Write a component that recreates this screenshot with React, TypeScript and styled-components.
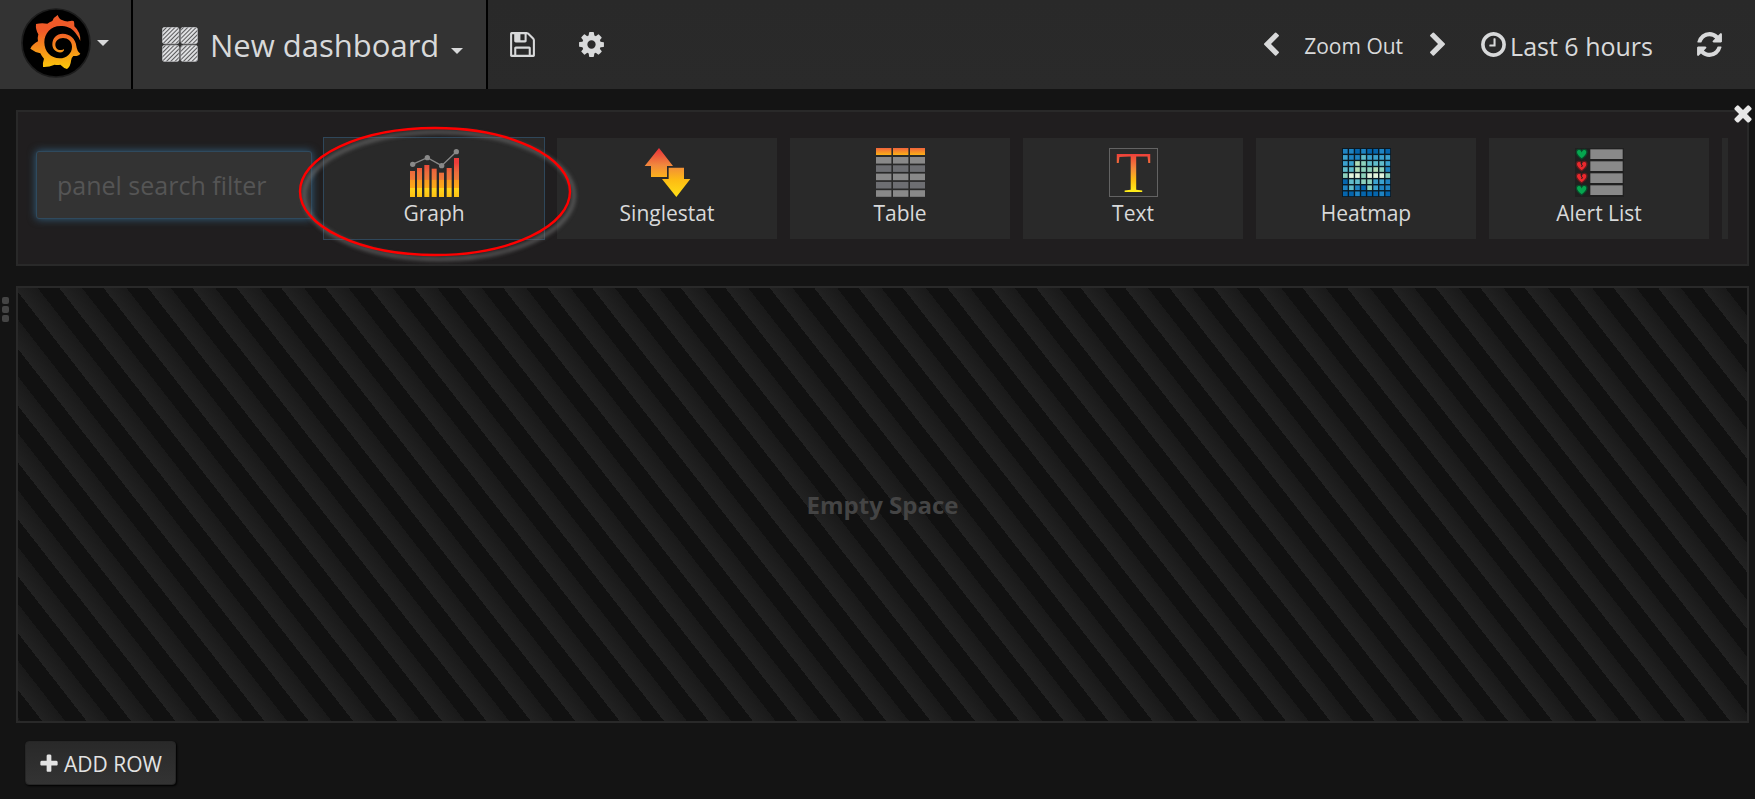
import React, { ReactNode } from "react";
import styled, { createGlobalStyle } from "styled-components";

const GlobalStyle = createGlobalStyle`
  *, *::before, *::after { box-sizing: border-box; }
  body {
    margin: 0;
    background: #141414;
    color: #d8d9da;
    font-family: "Open Sans", "Liberation Sans", sans-serif;
    font-size: 25px;
  }
  button, input { font: inherit; color: inherit; }
  svg { display: block; flex: none; }
`;

const Navbar = styled.header`
  display: flex;
  align-items: stretch;
  height: 89px;
  background: linear-gradient(180deg, #292929, #2a2a2a);
`;

const NavSection = styled.button<{ $pad: string; $gap: number }>`
  display: flex;
  align-items: center;
  gap: ${(p) => p.$gap}px;
  padding: ${(p) => p.$pad};
  border: 0;
  border-right: 2px solid #000;
  background: #333;
  font-size: 31px;
  line-height: 40px;
  white-space: nowrap;
`;

const Caret = styled.span<{ $low?: boolean }>`
  border: 6px solid transparent;
  border-top-color: #d8d9da;
  border-bottom: 0;
  margin-top: ${(p) => (p.$low ? 12 : 0)}px;
`;

const NavActions = styled.nav`
  display: flex;
  align-items: center;
  gap: 40px;
  padding: 0 20px;
`;

const TimeControls = styled.div`
  display: flex;
  align-items: center;
  gap: 20px;
  margin-left: auto;
  padding-right: 31px;
`;

const NavButton = styled.button<{ $size?: number; $after?: number }>`
  display: flex;
  align-items: center;
  gap: 2px;
  padding: 0;
  border: 0;
  background: none;
  font-size: ${(p) => p.$size ?? 25}px;
  line-height: 32px;
  margin-right: ${(p) => p.$after ?? 0}px;
  white-space: nowrap;
`;

const NavLabel = styled.span`
  padding-top: 2px;
`;

const Main = styled.main`
  display: flex;
  flex-direction: column;
  padding: 21px 6px 14px 16px;
`;

const Picker = styled.section`
  position: relative;
  display: flex;
  align-items: center;
  height: 156px;
  padding: 0 19px 0 18px;
  border: 2px solid #292929;
  background: #201e1f;
`;

const SearchInput = styled.input`
  flex: none;
  width: 276px;
  height: 68px;
  margin-bottom: 6px;
  padding: 0 20px;
  border: 1px solid #2f4a5e;
  border-radius: 3px;
  background: #333;
  outline: none;
  box-shadow: 0 0 9px #33607f;
  &::placeholder { color: #555; opacity: 1; }
`;

const TileList = styled.div`
  display: flex;
  flex: 1;
  gap: 13px;
  min-width: 0;
  padding: 1px 0 1px 12px;
  overflow: hidden;
`;

const Tile = styled.button<{ $active?: boolean }>`
  display: flex;
  flex: none;
  flex-direction: column;
  align-items: center;
  width: 220px;
  height: 101px;
  padding: 10px 0 0;
  border: 0;
  background: #292929;
  font-size: 21px;
  line-height: 32px;
  box-shadow: ${(p) => (p.$active ? "0 0 0 1px #2f475a" : "none")};
`;

const CloseButton = styled.button`
  position: absolute;
  top: -12px;
  right: -9px;
  padding: 0;
  border: 0;
  background: none;
  color: #e8e8e8;
`;

const Highlight = styled.svg`
  position: absolute;
  top: 10px;
  left: 276px;
  pointer-events: none;
  filter: drop-shadow(4px 4px 2px #777);
`;

const Row = styled.section`
  position: relative;
  margin-top: 20px;
`;

const RowHandle = styled.button`
  position: absolute;
  top: 11px;
  left: -14px;
  display: flex;
  flex-direction: column;
  gap: 2px;
  padding: 0;
  border: 0;
  background: none;
`;

const Dot = styled.span`
  width: 7px;
  height: 7px;
  border-radius: 2px;
  background: #444;
`;

const EmptyPanel = styled.div`
  display: flex;
  align-items: center;
  justify-content: center;
  height: 437px;
  border: 2px solid #292929;
  background: repeating-linear-gradient(-128deg, #111, #111 17px, #191919 17px, #222 35px);
  color: #444;
  font-size: 24px;
  font-weight: 700;
`;

const AddRowButton = styled.button`
  display: flex;
  align-items: center;
  align-self: flex-start;
  gap: 4px;
  height: 44px;
  margin: 18px 0 0 9px;
  padding: 2px 13px 0 12px;
  border: 1px solid #262626;
  border-radius: 4px;
  background: linear-gradient(180deg, #292929, #333);
  box-shadow: 1px 1px 2px #000;
  color: #e3e3e3;
  font-size: 21px;
`;

const glyphs = {
  save: "M512 1536h768v-384h-768v384zm896 0h128v-896q0-14-10-38.5t-20-34.5l-281-281q-10-10-34-20t-39-10v416q0 40-28 68t-68 28h-576q-40 0-68-28t-28-68v-416h-128v1280h128v-416q0-40 28-68t68-28h832q40 0 68 28t28 68v416zm-384-928v-320q0-13-9.5-22.5t-22.5-9.5h-192q-13 0-22.5 9.5t-9.5 22.5v320q0 13 9.5 22.5t22.5 9.5h192q13 0 22.5-9.5t9.5-22.5zm640 32v928q0 40-28 68t-68 28h-1344q-40 0-68-28t-28-68v-1344q0-40 28-68t68-28h928q40 0 88 20t76 48l280 280q28 28 48 76t20 88z",
  cog: "M1152 896q0-106-75-181t-181-75-181 75-75 181 75 181 181 75 181-75 75-181zm512-109v222q0 12-8 23t-20 13l-185 28q-19 54-39 91 35 50 107 138 10 12 10 25t-9 23q-27 37-99 108t-94 71q-12 0-26-9l-138-108q-44 23-91 38-16 136-29 186-7 28-36 28h-222q-14 0-24.5-8.5t-11.5-21.5l-28-184q-49-16-90-37l-141 107q-10 9-25 9-14 0-25-11-126-114-165-168-7-10-7-23 0-12 8-23 15-21 51-66.5t54-70.5q-27-50-41-99l-183-27q-13-2-21-12.5t-8-23.5v-222q0-12 8-23t19-13l186-28q14-46 39-92-40-57-107-138-10-12-10-24 0-10 9-23 26-36 98.5-107.5t94.5-71.5q13 0 26 10l138 107q44-23 91-38 16-136 29-186 7-28 36-28h222q14 0 24.5 8.5t11.5 21.5l28 184q49 16 90 37l142-107q9-9 24-9 13 0 25 10 129 119 165 170 7 8 7 22 0 12-8 23-15 21-51 66.5t-54 70.5q26 50 41 98l183 28q13 2 21 12.5t8 23.5z",
  clock: "M1024 544v448q0 14-9 23t-23 9h-320q-14 0-23-9t-9-23v-64q0-14 9-23t23-9h224v-352q0-14 9-23t23-9h64q14 0 23 9t9 23zm416 352q0-148-73-273t-198-198-273-73-273 73-198 198-73 273 73 273 198 198 273 73 273-73 198-198 73-273zm224 0q0 209-103 385.5t-279.5 279.5-385.5 103-385.5-103-279.5-279.5-103-385.5 103-385.5 279.5-279.5 385.5-103 385.5 103 279.5 279.5 103 385.5z",
  refresh: "M1639 1056q0 5-1 7-64 268-268 434.5t-478 166.5q-146 0-282.5-55t-243.5-157l-129 129q-19 19-45 19t-45-19-19-45v-448q0-26 19-45t45-19h448q26 0 45 19t19 45-19 45l-137 137q71 66 161 102t187 36q134 0 250-65t186-179q11-17 53-117 8-23 30-23h192q13 0 22.5 9.5t9.5 22.5zm25-800v448q0 26-19 45t-45 19h-448q-26 0-45-19t-19-45 19-45l138-138q-148-137-349-137-134 0-250 65t-186 179q-11 17-53 117-8 23-30 23h-199q-13 0-22.5-9.5t-9.5-22.5v-7q65-268 270-434.5t480-166.5q146 0 284 55.5t245 156.5l130-129q19-19 45-19t45 19 19 45z",
  left: "M1427 301l-531 531 531 531q19 19 19 45t-19 45l-166 166q-19 19-45 19t-45-19l-742-742q-19-19-19-45t19-45l742-742q19-19 45-19t45 19l166 166q19 19 19 45t-19 45z",
  right: "M1363 877l-742 742q-19 19-45 19t-45-19l-166-166q-19-19-19-45t19-45l531-531-531-531q-19-19-19-45t19-45l166-166q19-19 45-19t45 19l742 742q19 19 19 45t-19 45z",
  times: "M1490 1322q0 40-28 68l-136 136q-28 28-68 28t-68-28l-294-294-294 294q-28 28-68 28t-68-28l-136-136q-28-28-28-68t28-68l294-294-294-294q-28-28-28-68t28-68l136-136q28-28 68-28t68 28l294 294 294-294q28-28 68-28t68 28l136 136q28 28 28 68t-28 68l-294 294 294 294q28 28 28 68z",
  plus: "M1600 736v192q0 40-28 68t-68 28h-416v416q0 40-28 68t-68 28h-192q-40 0-68-28t-28-68v-416h-416q-40 0-68-28t-28-68v-192q0-40 28-68t68-28h416v-416q0-40 28-68t68-28h192q40 0 68 28t28 68v416h416q40 0 68 28t28 68z",
};

function Glyph({ name, size }: { name: keyof typeof glyphs; size: number }) {
  return (
    <svg width={size} height={size} viewBox="0 0 1792 1792" fill="currentColor" aria-hidden="true">
      <path d={glyphs[name]} />
    </svg>
  );
}

function Logo() {
  return (
    <svg width="70" height="70" viewBox="9 12 210 210" aria-hidden="true">
      <defs>
        <linearGradient id="logo" x1="0" y1="33" x2="0" y2="195" gradientUnits="userSpaceOnUse">
          <stop offset="0.3" stopColor="#f05a28" />
          <stop offset="1" stopColor="#fbca0a" />
        </linearGradient>
      </defs>
      <circle cx="114" cy="117" r="102" fill="#000" stroke="#1c1c1c" strokeWidth="5" />
      <path
        fill="url(#logo)"
        d="M119 33Q124 46 132 48Q141 53 152 52Q161 49 167 51Q170 57 169 67Q188 84 187 111Q182 98 172 86C160 71 145 66 127 66C99 66 79 88 79 115C79 143 99 163 125 163C146 163 162 148 162 128C162 112 149 102 135 102C121 102 112 111 112 122C112 131 118 138 127 138Q134 139 138 135Q140 141 132 145C116 148 103 137 103 121C103 102 116 89 134 89C156 89 173 105 175 126Q177 142 187 149Q182 157 166 156Q160 160 159 171Q158 186 147 195Q137 192 127 182Q118 184 110 182Q92 190 75 189Q73 178 78 164Q70 155 67 148Q50 144 37 134Q44 120 60 112Q58 101 61 91Q52 76 54 60Q70 56 88 59Q94 54 103 51Q108 39 119 33Z"
      />
    </svg>
  );
}

function DashboardIcon() {
  return (
    <svg width="36" height="35" viewBox="0 0 36 35" aria-hidden="true">
      <defs>
        <pattern id="hatch" width="3" height="3" patternUnits="userSpaceOnUse" patternTransform="rotate(45)">
          <rect width="3" height="3" fill="#dfe0e2" />
          <rect width="1" height="3" fill="#58585a" />
        </pattern>
      </defs>
      <g fill="url(#hatch)" stroke="#c4c6ca" strokeWidth="0.6">
        <rect x="0.3" y="0.3" width="16.8" height="16.4" rx="2.5" />
        <rect x="18.8" y="0.3" width="16.8" height="16.4" rx="2.5" />
        <rect x="0.3" y="18.2" width="16.8" height="16.4" rx="2.5" />
        <rect x="18.8" y="18.2" width="16.8" height="16.4" rx="2.5" />
      </g>
    </svg>
  );
}

const bars = [
  [360, 183],
  [381, 174],
  [403, 165],
  [425, 176],
  [447, 188],
  [470, 174],
  [492, 144],
];

function GraphIcon() {
  return (
    <svg width="49" height="49" viewBox="360 114 147 147" aria-hidden="true">
      <defs>
        <linearGradient id="bars" x1="0" y1="144" x2="0" y2="261" gradientUnits="userSpaceOnUse">
          <stop offset="0.12" stopColor="#ee3b3a" />
          <stop offset="0.36" stopColor="#ec6b3c" />
          <stop offset="0.55" stopColor="#ee7a38" />
          <stop offset="0.56" stopColor="#f79a1e" />
          <stop offset="0.76" stopColor="#fba919" />
          <stop offset="0.78" stopColor="#ffd51c" />
          <stop offset="1" stopColor="#fdc013" />
        </linearGradient>
      </defs>
      {bars.map(([x, y]) => (
        <rect key={x} x={x} y={y} width="15" height={261 - y} fill="url(#bars)" />
      ))}
      <path d="M367 163L412 143L455 167L499 125" fill="none" stroke="#898989" strokeWidth="4" />
      <g fill="#898989">
        <circle cx="368" cy="163" r="8" />
        <circle cx="412" cy="143" r="8" />
        <circle cx="455" cy="167" r="8" />
        <circle cx="499" cy="125" r="8" />
      </g>
    </svg>
  );
}

function SinglestatIcon() {
  return (
    <svg width="49" height="49" viewBox="279 84 147 147" aria-hidden="true">
      <defs>
        <linearGradient id="arrows" x1="0" y1="84" x2="0" y2="231" gradientUnits="userSpaceOnUse">
          <stop offset="0" stopColor="#e9303a" />
          <stop offset="0.35" stopColor="#f1883d" />
          <stop offset="0.65" stopColor="#fdbb14" />
          <stop offset="1" stopColor="#ffe015" />
        </linearGradient>
      </defs>
      <g fill="url(#arrows)">
        <path d="M327 84L369 138H351V171H303V138H284Z" />
        <path d="M356 143H402V177H421L379 231L336 177H356Z" />
      </g>
    </svg>
  );
}

function TableIcon() {
  const columns = [0, 17, 34];
  return (
    <svg width="49" height="49" viewBox="0 0 49 49" aria-hidden="true">
      <defs>
        <linearGradient id="thead" x1="0" y1="0" x2="0" y2="1">
          <stop offset="0" stopColor="#f1643c" />
          <stop offset="1" stopColor="#fbb116" />
        </linearGradient>
      </defs>
      {columns.map((x) => (
        <g key={x}>
          <rect x={x} width="15.4" height="7" fill="url(#thead)" />
          {[0, 1, 2, 3, 4].map((r) => (
            <rect key={r} x={x} y={9 + r * 8.3} width="15.4" height="6.6" fill={r % 2 ? "#6d6e72" : "#898989"} />
          ))}
        </g>
      ))}
    </svg>
  );
}

function TextIcon() {
  return (
    <svg width="49" height="49" viewBox="0 0 49 49" aria-hidden="true">
      <defs>
        <linearGradient id="letter" x1="0" y1="5" x2="0" y2="44" gradientUnits="userSpaceOnUse">
          <stop offset="0" stopColor="#ee3a3a" />
          <stop offset="0.4" stopColor="#f3893a" />
          <stop offset="0.7" stopColor="#fcc011" />
          <stop offset="1" stopColor="#fff01a" />
        </linearGradient>
      </defs>
      <rect x="0.5" y="0.5" width="48" height="48" fill="#2b2b2b" stroke="#636363" />
      <text x="24.5" y="43.5" textAnchor="middle" fontFamily="Liberation Serif, serif" fontSize="58" fill="url(#letter)">
        T
      </text>
    </svg>
  );
}

const heatColors = ["#0566ae", "#1f84c3", "#3ba2cf", "#60bccb", "#8bd0bb", "#b0dcb6", "#e2f3dc"];
const heatRows = ["11010010", "21132222", "22543332", "33544541", "46646664", "03344221", "13104211", "00100010"];

function HeatmapIcon() {
  return (
    <svg width="49" height="49" viewBox="0 0 147 147" aria-hidden="true">
      <rect width="147" height="147" fill="#0b1a24" />
      {heatRows.map((row, r) =>
        row.split("").map((level, c) => (
          <rect key={`${r}-${c}`} x={3 + c * 18.2} y={3 + r * 18.2} width="14" height="14" fill={heatColors[Number(level)]} />
        ))
      )}
    </svg>
  );
}

function AlertListIcon() {
  const states = [true, false, false, true];
  return (
    <svg width="49" height="49" viewBox="0 0 147 147" aria-hidden="true">
      <rect width="147" height="147" fill="#202020" />
      {states.map((ok, i) => (
        <g key={i} transform={`translate(0 ${i * 36})`}>
          <path
            d="M20 33C10 26 4 19 4 12C4 3 16 1 20 9C24 1 36 3 36 12C36 19 30 26 20 33Z"
            fill={ok ? "#06a64f" : "#e9282d"}
            stroke={ok ? "#0b4a2b" : "#5f1c1e"}
            strokeWidth="4"
          />
          {!ok && <path d="M20 6L18 12L22 15L20 21" fill="none" stroke="#202020" strokeWidth="3" />}
          <rect x="46" y="4" width="97" height="29" fill="#898989" />
        </g>
      ))}
    </svg>
  );
}

const panels: { label: string; icon: ReactNode }[] = [
  { label: "Graph", icon: <GraphIcon /> },
  { label: "Singlestat", icon: <SinglestatIcon /> },
  { label: "Table", icon: <TableIcon /> },
  { label: "Text", icon: <TextIcon /> },
  { label: "Heatmap", icon: <HeatmapIcon /> },
  { label: "Alert List", icon: <AlertListIcon /> },
];

export default function App() {
  return (
    <>
      <GlobalStyle />
      <Navbar>
        <NavSection $pad="0 22px 3px 21px" $gap={6} aria-label="Main menu">
          <Logo />
          <Caret />
        </NavSection>
        <NavSection $pad="0 23px 0 29px" $gap={12}>
          <DashboardIcon />
          New dashboard
          <Caret $low />
        </NavSection>
        <NavActions>
          <NavButton aria-label="Save dashboard">
            <Glyph name="save" size={29} />
          </NavButton>
          <NavButton aria-label="Settings">
            <Glyph name="cog" size={29} />
          </NavButton>
        </NavActions>
        <TimeControls>
          <NavButton aria-label="Back">
            <Glyph name="left" size={26} />
          </NavButton>
          <NavButton $size={21} $after={2}>
            <NavLabel>Zoom Out</NavLabel>
          </NavButton>
          <NavButton aria-label="Forward" $after={8}>
            <Glyph name="right" size={26} />
          </NavButton>
          <NavButton $after={22}>
            <Glyph name="clock" size={29} />
            <NavLabel>Last 6 hours</NavLabel>
          </NavButton>
          <NavButton aria-label="Refresh">
            <Glyph name="refresh" size={29} />
          </NavButton>
        </TimeControls>
      </Navbar>
      <Main>
        <Picker>
          <SearchInput type="text" placeholder="panel search filter" aria-label="Panel search filter" />
          <TileList>
            {panels.map((panel, i) => (
              <Tile key={panel.label} $active={i === 0}>
                {panel.icon}
                {panel.label}
              </Tile>
            ))}
            <Tile aria-label="More panels" />
          </TileList>
          <CloseButton aria-label="Close">
            <Glyph name="times" size={26} />
          </CloseButton>
          <Highlight width="290" height="146" viewBox="0 0 290 146" aria-hidden="true">
            <ellipse cx="141" cy="69.5" rx="135" ry="63.5" fill="none" stroke="#f00" strokeWidth="2.4" />
          </Highlight>
        </Picker>
        <Row>
          <RowHandle aria-label="Row menu">
            <Dot />
            <Dot />
            <Dot />
          </RowHandle>
          <EmptyPanel>Empty Space</EmptyPanel>
        </Row>
        <AddRowButton>
          <Glyph name="plus" size={22} />
          ADD ROW
        </AddRowButton>
      </Main>
    </>
  );
}
